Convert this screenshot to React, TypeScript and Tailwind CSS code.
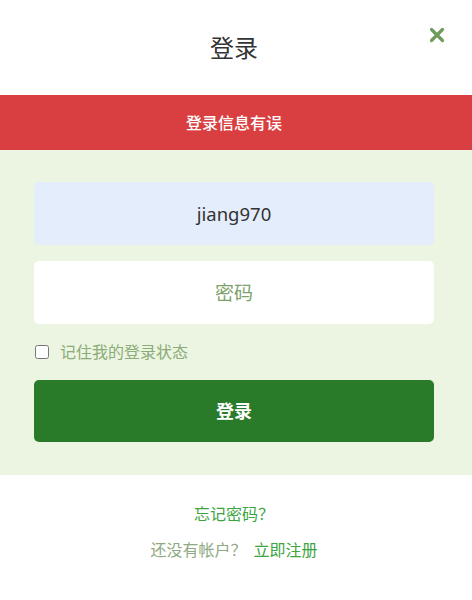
import { useState } from "react";

// Login modal with an error banner, tinted form area and footer links.

const FONT = { fontFamily: '"Noto Sans", "Noto Sans CJK SC", sans-serif' };

export default function App() {
  const [remember, setRemember] = useState(false);

  return (
    <div className="w-[472px] h-[600px] bg-white" style={FONT}>
      {/* Header */}
      <div className="relative h-[95px] flex items-center justify-center pr-[4px]">
        <h1 className="text-[24px] text-[#333] font-normal leading-none">登录</h1>
        <button
          aria-label="关闭"
          className="absolute right-[27px] top-[27px] text-[#6f9b5e]"
        >
          <svg width="16" height="16" viewBox="0 0 16 16">
            <path
              d="M2.5 2.5 L13.5 13.5 M13.5 2.5 L2.5 13.5"
              stroke="currentColor"
              strokeWidth="3.2"
              strokeLinecap="round"
            />
          </svg>
        </button>
      </div>

      {/* Error banner */}
      <div className="h-[55px] bg-[#d93f40] flex items-center justify-center pr-[4px]">
        <span className="text-white text-[16px] font-medium">登录信息有误</span>
      </div>

      {/* Form */}
      <div className="bg-[#ebf5e2] pl-[34px] pt-[32px] pb-[33px]">
        <div className="w-[400px]">
          <div className="h-[63px] rounded-[5px] bg-[#e4edfb] flex items-center justify-center text-[18.5px] text-[#333]">
            jiang970
          </div>
          <input
            type="password"
            placeholder="密码"
            className="mt-[16px] w-full h-[63px] rounded-[5px] bg-white text-center text-[19px] outline-none placeholder:text-[#7fa26c]"
          />
          <label className="mt-[19px] h-[17px] flex items-center gap-[11px] cursor-pointer">
            <input
              type="checkbox"
              checked={remember}
              onChange={(e) => setRemember(e.target.checked)}
              className="w-[14px] h-[14px] ml-[1px]"
            />
            <span className="text-[16px] text-[#8bab78] leading-none">记住我的登录状态</span>
          </label>
          <button className="mt-[20px] w-full h-[62px] rounded-[5px] bg-[#297b2a] text-white text-[18px] font-bold">
            登录
          </button>
        </div>
      </div>

      {/* Footer links */}
      <div className="flex flex-col items-center pt-[27px] pr-[4px] gap-[12px] text-[16px] leading-[24px]">
        <a className="text-[#3da53f]">忘记密码？</a>
        <div>
          <span className="text-[#8fa982]">还没有帐户？ </span>
          <a className="text-[#3da53f] ml-[3px]">立即注册</a>
        </div>
      </div>
    </div>
  );
}
